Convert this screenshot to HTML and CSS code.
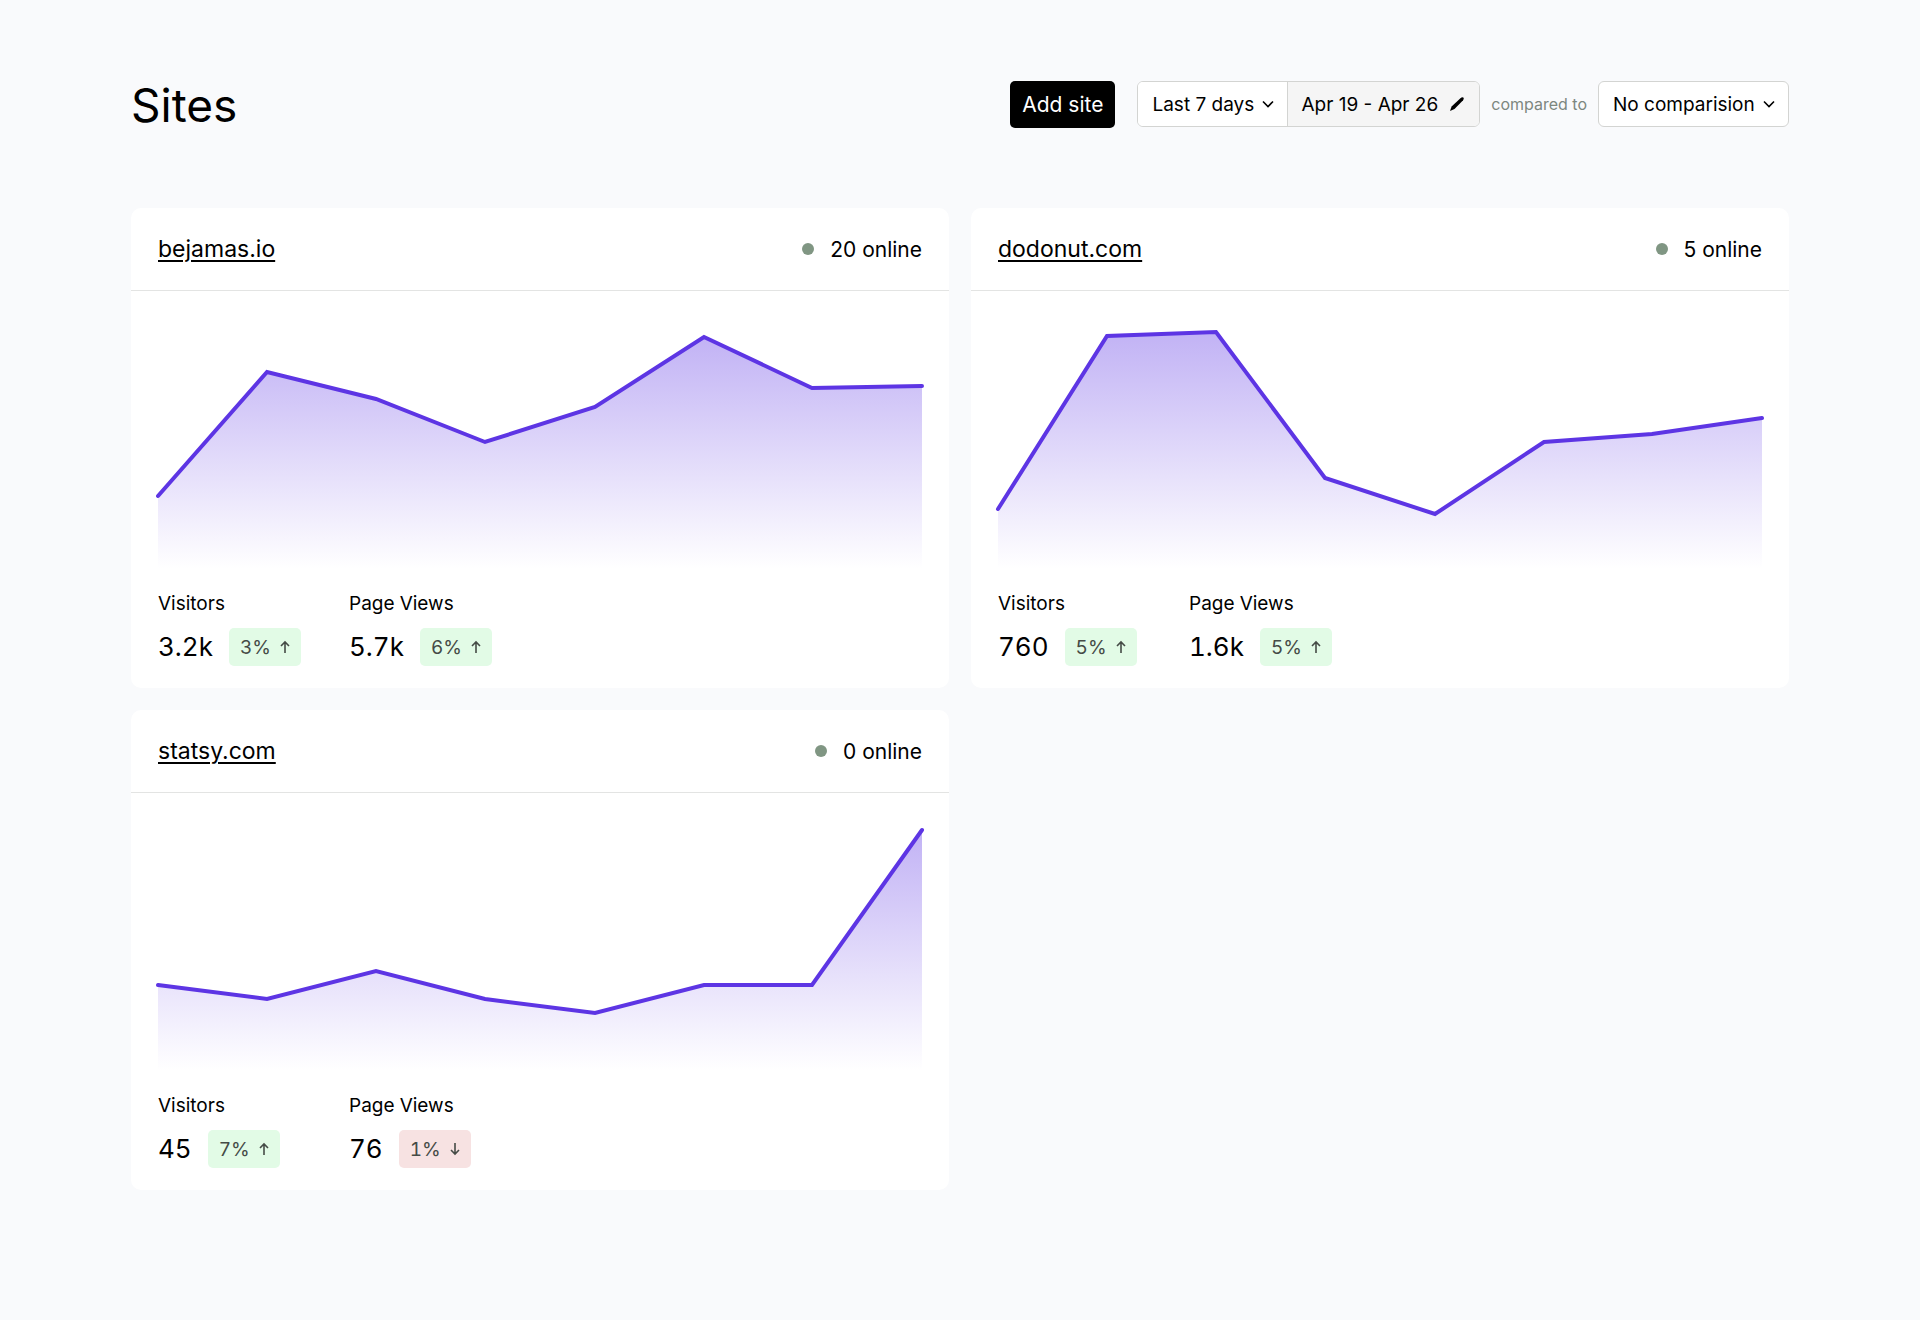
FILE: index.html
```html
<!DOCTYPE html>
<html lang="en">
<head>
<meta charset="utf-8">
<meta name="viewport" content="width=device-width, initial-scale=1">
<title>Sites</title>
<link rel="stylesheet" href="styles.css">
</head>
<body>
<svg class="defs" width="0" height="0" aria-hidden="true">
  <defs>
    <linearGradient id="fade" x1="0" y1="0" x2="0" y2="1">
      <stop offset="0" stop-color="#5d35e4" stop-opacity="0.38"/>
      <stop offset="1" stop-color="#5d35e4" stop-opacity="0"/>
    </linearGradient>
    <symbol id="chevron" viewBox="0 0 14 14"><path d="M2 4.500l5 5 5-5" fill="none" stroke="#000" stroke-width="1.600"/></symbol>
    <symbol id="arrow-up" viewBox="0 0 12 14"><path d="M6 13V2M2 6l4-4 4 4" fill="none" stroke="currentColor" stroke-width="1.600"/></symbol>
    <symbol id="arrow-down" viewBox="0 0 12 14"><path d="M6 1v11M2 8l4 4 4-4" fill="none" stroke="currentColor" stroke-width="1.600"/></symbol>
    <symbol id="pencil" viewBox="0 0 16 16"><path d="M1 15l1.600-4.500L11.700 1.900q1.500-1.200 2.700-.3 1 1.200-.3 2.700L5.500 13z" fill="#000"/></symbol>
  </defs>
</svg>
<main class="page">
  <header class="top">
    <h1 class="title">Sites</h1>
    <div class="tools">
      <button class="add" type="button">Add site</button>
      <div class="range">
        <div class="picker">
          <select class="select" aria-label="Period"><option>Last 7 days</option></select>
          <svg class="chevron"><use href="#chevron"/></svg>
        </div>
        <button class="dates" type="button">Apr 19 - Apr 26 <svg class="pencil"><use href="#pencil"/></svg></button>
      </div>
      <label class="compare" for="compare">compared to</label>
      <div class="picker picker-solo">
        <select class="select" id="compare"><option>No comparision</option></select>
        <svg class="chevron"><use href="#chevron"/></svg>
      </div>
    </div>
  </header>
  <div class="grid">
    <article class="card">
      <div class="card-head">
        <a class="site" href="#">bejamas.io</a>
        <span class="online"><i class="dot"></i>20 online</span>
      </div>
      <svg class="chart" viewBox="0 0 764 278" role="img" aria-label="Visitors over the last 7 days">
        <path class="area" d="M0 205L109 81 218 108 327 151 437 116 546 46 654 97 764 95V278H0z"/>
        <path class="line" d="M0 205L109 81 218 108 327 151 437 116 546 46 654 97 764 95"/>
      </svg>
      <dl class="stats">
        <div class="stat"><dt>Visitors</dt><dd><span class="value">3.2k</span><span class="badge up">3% <svg class="arrow"><use href="#arrow-up"/></svg></span></dd></div>
        <div class="stat"><dt>Page Views</dt><dd><span class="value">5.7k</span><span class="badge up">6% <svg class="arrow"><use href="#arrow-up"/></svg></span></dd></div>
      </dl>
    </article>
    <article class="card">
      <div class="card-head">
        <a class="site" href="#">dodonut.com</a>
        <span class="online"><i class="dot"></i>5 online</span>
      </div>
      <svg class="chart" viewBox="0 0 764 278" role="img" aria-label="Visitors over the last 7 days">
        <path class="area" d="M0 218L109 45 218 41 327 187 437 223 546 151 654 143 764 127V278H0z"/>
        <path class="line" d="M0 218L109 45 218 41 327 187 437 223 546 151 654 143 764 127"/>
      </svg>
      <dl class="stats">
        <div class="stat"><dt>Visitors</dt><dd><span class="value">760</span><span class="badge up">5% <svg class="arrow"><use href="#arrow-up"/></svg></span></dd></div>
        <div class="stat"><dt>Page Views</dt><dd><span class="value">1.6k</span><span class="badge up">5% <svg class="arrow"><use href="#arrow-up"/></svg></span></dd></div>
      </dl>
    </article>
    <article class="card">
      <div class="card-head">
        <a class="site" href="#">statsy.com</a>
        <span class="online"><i class="dot"></i>0 online</span>
      </div>
      <svg class="chart" viewBox="0 0 764 278" role="img" aria-label="Visitors over the last 7 days">
        <path class="area" d="M0 192L109 206 218 178 327 206 437 220 546 192 654 192 764 37V278H0z"/>
        <path class="line" d="M0 192L109 206 218 178 327 206 437 220 546 192 654 192 764 37"/>
      </svg>
      <dl class="stats">
        <div class="stat"><dt>Visitors</dt><dd><span class="value">45</span><span class="badge up">7% <svg class="arrow"><use href="#arrow-up"/></svg></span></dd></div>
        <div class="stat"><dt>Page Views</dt><dd><span class="value">76</span><span class="badge down">1% <svg class="arrow"><use href="#arrow-down"/></svg></span></dd></div>
      </dl>
    </article>
  </div>
</main>
</body>
</html>
```
FILE: styles.css
```css
* { box-sizing: border-box; }
body { margin: 0; background: #f9fafc; color: #000; font-family: Inter, "Liberation Sans", sans-serif; font-size: 19px; }
button, select { font: inherit; color: inherit; margin: 0; }
.defs { display: block; }
.page { max-width: 1920px; margin: 0 auto; padding: 80px 131px 130px; }
.top { display: flex; align-items: center; justify-content: space-between; flex-wrap: wrap; gap: 24px; margin-bottom: 80px; }
.title { margin: 0; padding-top: 2px; font-size: 46px; line-height: 46px; font-weight: 400; }
.tools { display: flex; align-items: center; flex-wrap: wrap; min-height: 48px; }
.add { height: 47px; padding: 0 12px; margin-right: 22px; border: 0; border-radius: 5px; background: #000; color: #fff; font-size: 21px; }
.range { display: flex; height: 46px; border: 1px solid #d3d4d2; border-radius: 6px; overflow: hidden; background: #fff; }
.picker { display: grid; align-items: center; background: #fff; }
.picker > * { grid-area: 1 / 1; }
.picker-solo { height: 46px; border: 1px solid #d3d4d2; border-radius: 6px; overflow: hidden; }
.select { appearance: none; height: 100%; padding: 0 33px 0 14px; border: 0; background: transparent; }
.chevron { width: 14px; height: 14px; margin-right: 12px; justify-self: end; pointer-events: none; }
.dates { display: flex; align-items: center; gap: 11px; padding: 0 14px 0 13px; border: 0; border-left: 1px solid #d3d4d2; background: #f5f5f5; }
.pencil { width: 16px; height: 16px; }
.compare { margin: 0 11px; color: #7d877f; font-size: 16px; }
.grid { display: grid; grid-template-columns: repeat(2, minmax(0, 1fr)); gap: 22px; }
.card { background: #fff; border-radius: 10px; }
.card-head { display: flex; align-items: center; justify-content: space-between; height: 83px; padding: 0 27px; border-bottom: 1px solid #e3e4e3; }
.site { color: #000; font-size: 23px; text-decoration: underline; text-decoration-thickness: 2px; text-underline-offset: 3px; }
.online { display: flex; align-items: center; gap: 16px; font-size: 21px; }
.dot { width: 12px; height: 12px; border-radius: 50%; background: #809683; }
.chart { display: block; width: calc(100% - 54px); margin: 0 27px; overflow: visible; }
.area { fill: url(#fade); }
.line { fill: none; stroke: #5d35e4; stroke-width: 4; stroke-linecap: round; }
.stats { display: flex; margin: 0; padding: 23px 27px 22px; font-variant-numeric: tabular-nums; }
.stat { min-width: 191px; }
.stat dt { line-height: 24px; margin-bottom: 12px; }
.stat dd { display: flex; align-items: center; gap: 16px; margin: 0; }
.value { font-size: 26px; line-height: 38px; }
.badge { display: flex; align-items: center; gap: 8px; height: 38px; padding: 0 10px 0 11px; border-radius: 5px; color: #454b46; }
.up { background: #e2fbe6; }
.down { background: #f7e2e2; }
.arrow { width: 12px; height: 14px; }
```
